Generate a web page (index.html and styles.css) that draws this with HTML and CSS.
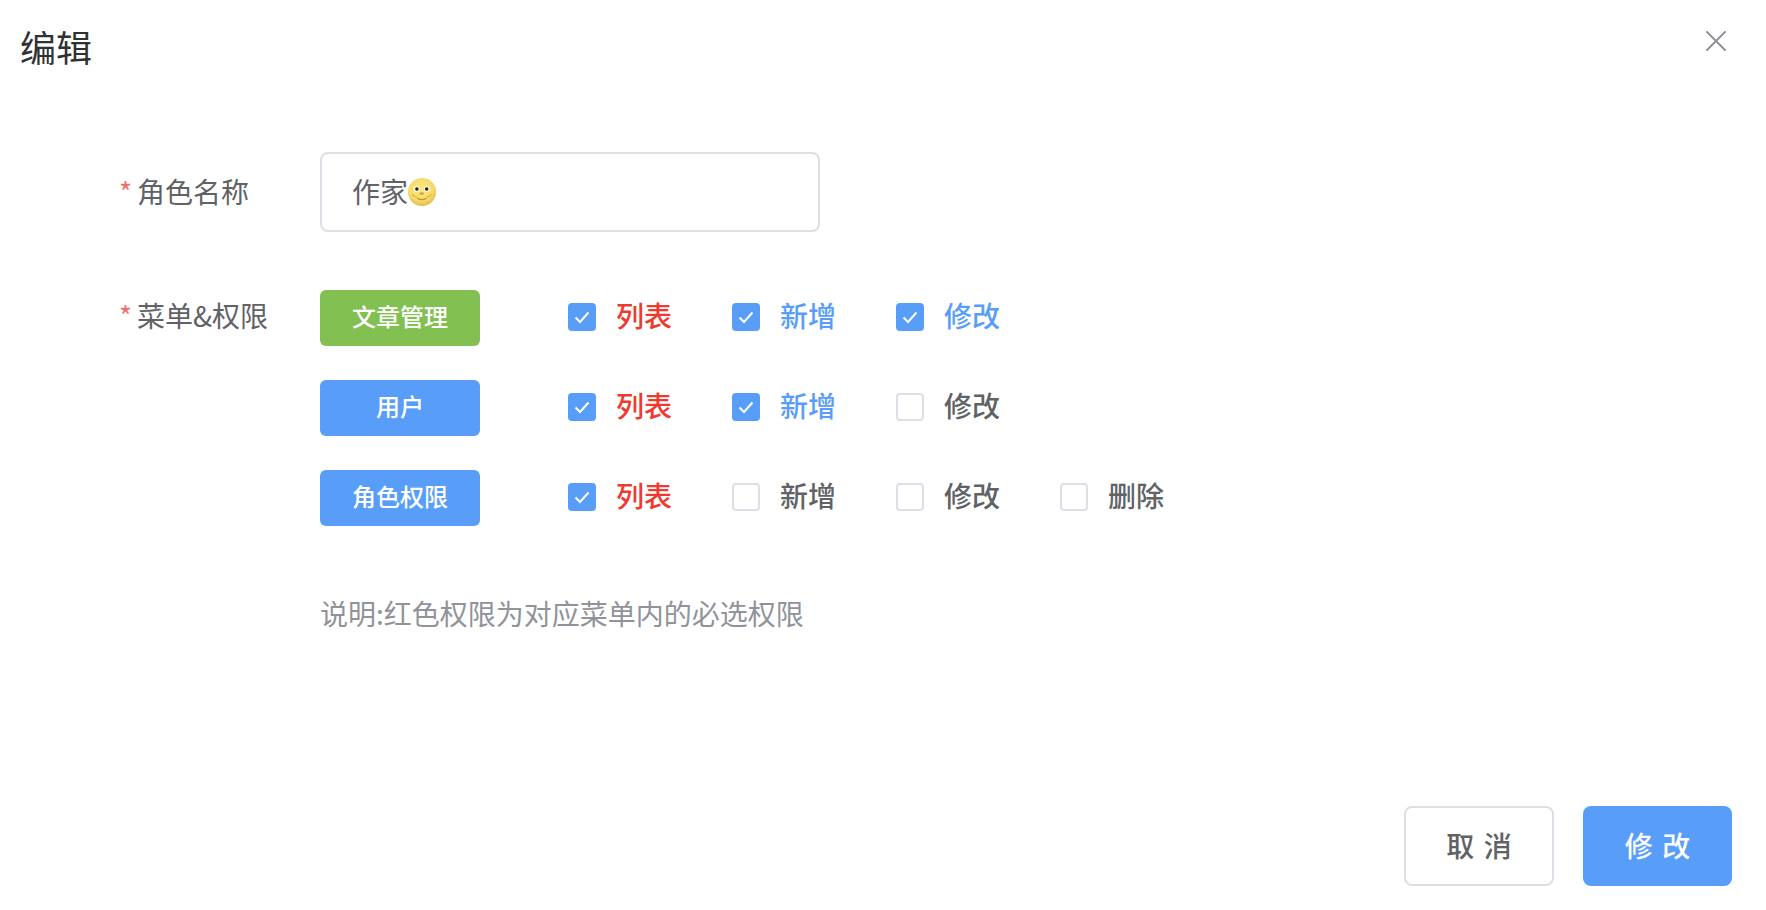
FILE: index.html
```html
<!DOCTYPE html>
<html lang="zh-CN">
<head>
<meta charset="utf-8">
<title>编辑</title>
<link rel="stylesheet" href="styles.css">
</head>
<body>
<div class="dialog">
  <header class="dialog-header">
    <h2 class="dialog-title">编辑</h2>
    <button class="dialog-close" aria-label="关闭">
      <svg width="20" height="20" viewBox="0 0 20 20"><path d="M1 1L19 19M19 1L1 19" stroke="#909399" stroke-width="2" stroke-linecap="round" fill="none"/></svg>
    </button>
  </header>

  <form class="form">
    <div class="form-row">
      <label class="form-label"><span class="req">*</span>角色名称</label>
      <div class="input">
        <span class="input-text">作家</span>
        <svg class="emoji" width="28" height="28" viewBox="0 0 28 28">
          <defs>
            <radialGradient id="moon" cx="46%" cy="38%" r="64%">
              <stop offset="0" stop-color="#fbe886"/>
              <stop offset="0.7" stop-color="#f5d968"/>
              <stop offset="1" stop-color="#dfb84c"/>
            </radialGradient>
          </defs>
          <circle cx="14" cy="14" r="14" fill="url(#moon)"/>
          <ellipse cx="8.6" cy="11" rx="3.2" ry="3" fill="#fff6cf"/>
          <ellipse cx="19" cy="11" rx="3.2" ry="3" fill="#fff6cf"/>
          <circle cx="8.9" cy="11" r="1.8" fill="#2b2115"/>
          <circle cx="18.7" cy="11" r="1.8" fill="#2b2115"/>
          <ellipse cx="13.8" cy="15.5" rx="2.4" ry="1.6" fill="#d8ae46"/>
          <path d="M9.5 20.2c2.6 1.7 6.2 1.7 8.8 0" stroke="#bd9235" stroke-width="1.2" fill="none" stroke-linecap="round"/>
          <path d="M4.5 16.5c1 1.7 2.6 2.2 3.8 1.7M23.2 16.5c-1 1.7-2.6 2.2-3.8 1.7" stroke="#d8ae46" stroke-width="1.1" fill="none" stroke-linecap="round"/>
        </svg>
      </div>
    </div>

    <div class="form-row perm-section">
      <label class="form-label perm-label"><span class="req">*</span>菜单&amp;权限</label>
      <div class="perm-list">
        <div class="perm-row">
          <span class="tag tag-green">文章管理</span>
          <div class="checks">
            <span class="check on must"><i class="box"><svg viewBox="0 0 28 28"><path d="M7.5 14.5L12 19L20.5 9.5"/></svg></i>列表</span>
            <span class="check on"><i class="box"><svg viewBox="0 0 28 28"><path d="M7.5 14.5L12 19L20.5 9.5"/></svg></i>新增</span>
            <span class="check on"><i class="box"><svg viewBox="0 0 28 28"><path d="M7.5 14.5L12 19L20.5 9.5"/></svg></i>修改</span>
          </div>
        </div>
        <div class="perm-row">
          <span class="tag">用户</span>
          <div class="checks">
            <span class="check on must"><i class="box"><svg viewBox="0 0 28 28"><path d="M7.5 14.5L12 19L20.5 9.5"/></svg></i>列表</span>
            <span class="check on"><i class="box"><svg viewBox="0 0 28 28"><path d="M7.5 14.5L12 19L20.5 9.5"/></svg></i>新增</span>
            <span class="check"><i class="box"></i>修改</span>
          </div>
        </div>
        <div class="perm-row">
          <span class="tag">角色权限</span>
          <div class="checks">
            <span class="check on must"><i class="box"><svg viewBox="0 0 28 28"><path d="M7.5 14.5L12 19L20.5 9.5"/></svg></i>列表</span>
            <span class="check"><i class="box"></i>新增</span>
            <span class="check"><i class="box"></i>修改</span>
            <span class="check"><i class="box"></i>删除</span>
          </div>
        </div>
      </div>
    </div>

    <p class="note">说明:红色权限为对应菜单内的必选权限</p>
  </form>

  <footer class="dialog-footer">
    <button class="btn">取 消</button>
    <button class="btn btn-primary">修 改</button>
  </footer>
</div>
</body>
</html>
```

FILE: styles.css
```css
* { box-sizing: border-box; }

html, body {
  margin: 0;
  height: 100%;
  background: #fff;
}

body {
  font-family: "Noto Sans CJK SC", "Noto Sans", sans-serif;
  color: #606266;
}

.dialog {
  position: relative;
  display: flex;
  flex-direction: column;
  height: 910px;
}

.dialog-header {
  padding: 22px 20px 2px;
}

.dialog-title {
  margin: 0;
  font-size: 36px;
  font-weight: 400;
  line-height: 48px;
  color: #303133;
}

.dialog-close {
  position: absolute;
  top: 31px;
  right: 40px;
  width: 20px;
  height: 20px;
  padding: 0;
  border: 0;
  background: none;
  display: flex;
}

.form {
  padding: 80px 0 0 119px;
}

.form-row {
  display: flex;
}

.form-label {
  width: 201px;
  flex: none;
  font-size: 28px;
  line-height: 78px;
  color: #606266;
}

.perm-label {
  line-height: 51px;
}

.req {
  color: #f56c6c;
  margin-right: 5px;
  font-size: 28px;
}

.input {
  width: 500px;
  height: 80px;
  border: 2px solid #dcdfe6;
  border-radius: 8px;
  padding: 0 30px;
  display: flex;
  align-items: center;
  font-size: 28px;
  color: #606266;
}

.input-text {
  padding-bottom: 2px;
}

.emoji {
  flex: none;
}

.perm-section {
  margin-top: 58px;
}

.perm-list {
  display: flex;
  flex-direction: column;
  gap: 34px;
}

.perm-row {
  display: flex;
  align-items: center;
  gap: 88px;
}

.tag {
  width: 160px;
  height: 56px;
  border-radius: 6px;
  background: #589ef9;
  color: #fff;
  font-size: 24px;
  font-weight: 500;
  line-height: 52px;
  text-align: center;
}

.tag-green {
  background: #81c051;
}

.checks {
  display: flex;
  gap: 60px;
  margin-bottom: 6px;
}

.check {
  display: flex;
  align-items: center;
  gap: 20px;
  font-size: 28px;
  line-height: 40px;
  font-weight: 500;
  color: #606266;
}

.check.on {
  color: #589ef9;
}

.check.must {
  color: #ee3a2f;
}

.box {
  width: 28px;
  height: 28px;
  flex: none;
  display: block;
  margin-top: 4px;
  border: 2px solid #dcdfe6;
  border-radius: 4px;
  background: #fff;
}

.check.on .box {
  border: 0;
  background: #589ef9;
}

.box svg {
  display: block;
  width: 28px;
  height: 28px;
  fill: none;
  stroke: #fff;
  stroke-width: 2;
}

.note {
  margin: 48px 0 0 201px;
  font-size: 28px;
  line-height: 78px;
  color: #909399;
}

.dialog-footer {
  margin-top: auto;
  padding: 0 34px 24px 0;
  display: flex;
  justify-content: flex-end;
  gap: 29px;
}

.btn {
  width: 150px;
  height: 80px;
  border: 2px solid #dcdfe6;
  border-radius: 8px;
  background: #fff;
  color: #606266;
  font-family: inherit;
  font-size: 28px;
  font-weight: 500;
  word-spacing: 3px;
  padding: 0 0 2px;
}

.btn-primary {
  width: 149px;
  border: 0;
  background: #589ef9;
  color: #fff;
}
```
